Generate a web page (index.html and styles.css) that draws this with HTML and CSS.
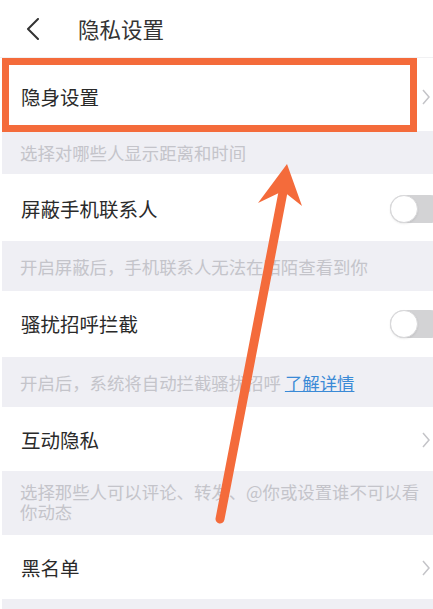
FILE: index.html
```html
<!DOCTYPE html>
<html lang="zh-CN">
<head>
<meta charset="utf-8">
<title>隐私设置</title>
<link rel="stylesheet" href="styles.css">
</head>
<body>
<div class="page">
  <header class="header">
    <svg class="back" viewBox="0 0 14 22" width="14" height="22" aria-hidden="true">
      <path d="M12 1 L2 11 L12 21" fill="none" stroke="#333" stroke-width="2" stroke-linecap="round" stroke-linejoin="round"/>
    </svg>
    <h1 class="title">隐私设置</h1>
  </header>

  <div class="row row--first">
    <span class="label">隐身设置</span>
    <svg class="chev" viewBox="0 0 8 16" width="8" height="16" aria-hidden="true"><path d="M1 1 L7 8 L1 15" fill="none" stroke="#c4c4c8" stroke-width="1.5"/></svg>
  </div>
  <div class="note note--short">选择对哪些人显示距离和时间</div>

  <div class="row row--tall">
    <span class="label">屏蔽手机联系人</span>
    <span class="toggle"><span class="knob"></span></span>
  </div>
  <div class="note">开启屏蔽后，手机联系人无法在陌陌查看到你</div>

  <div class="row">
    <span class="label">骚扰招呼拦截</span>
    <span class="toggle"><span class="knob"></span></span>
  </div>
  <div class="note">开启后，系统将自动拦截骚扰招呼 <a class="link" href="#">了解详情</a></div>

  <div class="row row--short">
    <span class="label">互动隐私</span>
    <svg class="chev" viewBox="0 0 8 16" width="8" height="16" aria-hidden="true"><path d="M1 1 L7 8 L1 15" fill="none" stroke="#c4c4c8" stroke-width="1.5"/></svg>
  </div>
  <div class="note note--multi">选择那些人可以评论、转发、@你或设置谁不可以看你动态</div>

  <div class="row row--short">
    <span class="label">黑名单</span>
    <svg class="chev" viewBox="0 0 8 16" width="8" height="16" aria-hidden="true"><path d="M1 1 L7 8 L1 15" fill="none" stroke="#c4c4c8" stroke-width="1.5"/></svg>
  </div>
  <div class="note note--end"></div>

  <div class="highlight"></div>
  <svg class="arrow" viewBox="0 0 433 609" width="433" height="609" aria-hidden="true">
    <line x1="220" y1="519" x2="283" y2="192" stroke="#f46b3b" stroke-width="9" stroke-linecap="round"/>
    <polygon points="287,164 302,206 283,191 258,203" fill="#f46b3b"/>
  </svg>
</div>
</body>
</html>
```

FILE: styles.css
```css
html, body {
  margin: 0;
  padding: 0;
  background: #ffffff;
}

body {
  font-family: "Noto Sans CJK SC", "Noto Sans", sans-serif;
  width: 433px;
  height: 609px;
  overflow: hidden;
}

.page {
  position: relative;
  width: 433px;
  height: 609px;
  overflow: hidden;
  padding-left: 2px;
  box-sizing: border-box;
  background: #ffffff;
}

.header {
  height: 58px;
  display: flex;
  align-items: center;
  padding-left: 26px;
  box-sizing: border-box;
  border-bottom: 1px solid #f1f1f3;
  margin-left: -2px;
}

.back {
  display: block;
  flex: none;
}

.title {
  margin: 0 0 0 38px;
  font-size: 21.5px;
  font-weight: 400;
  color: #333333;
  line-height: 1;
}

.row {
  height: 66px;
  display: flex;
  align-items: center;
  justify-content: space-between;
  padding: 0 3px 0 19px;
  box-sizing: border-box;
  background: #ffffff;
}

.row--first {
  height: 73px;
  padding-top: 4px;
}

.row--tall {
  height: 67px;
  padding-top: 3px;
}

.row--short {
  height: 64px;
  padding-top: 2px;
}

.label {
  font-size: 19.5px;
  color: #2a2a2a;
  line-height: 1;
}

.chev {
  display: block;
  flex: none;
}

.toggle {
  position: relative;
  flex: none;
  width: 54px;
  height: 28px;
  margin-right: -14px;
  border-radius: 14px;
  background: #d3d3d5;
}

.knob {
  position: absolute;
  left: 0;
  top: 0;
  width: 28px;
  height: 28px;
  border-radius: 50%;
  background: #ffffff;
  border: 1px solid #d8d8da;
  box-sizing: border-box;
  box-shadow: 0 1px 2px rgba(0, 0, 0, 0.08);
}

.note {
  height: 50px;
  display: flex;
  align-items: center;
  padding: 2px 8px 0 18px;
  box-sizing: border-box;
  background: #efeff4;
  font-size: 17.4px;
  color: #c4c4ca;
  line-height: 1;
}

.note--short {
  height: 43px;
  padding-top: 0;
}

.note--multi {
  display: block;
  height: 64px;
  padding-top: 11px;
  line-height: 20px;
}

.note--end {
  height: 20px;
}

.link {
  color: #3a8ad6;
  text-decoration: underline;
  margin-left: 4px;
}

.highlight {
  position: absolute;
  left: 2px;
  top: 58px;
  width: 415px;
  height: 74px;
  border: 7px solid #f46b3b;
  box-sizing: border-box;
  pointer-events: none;
}

.arrow {
  position: absolute;
  left: 0;
  top: 0;
  pointer-events: none;
}
```
